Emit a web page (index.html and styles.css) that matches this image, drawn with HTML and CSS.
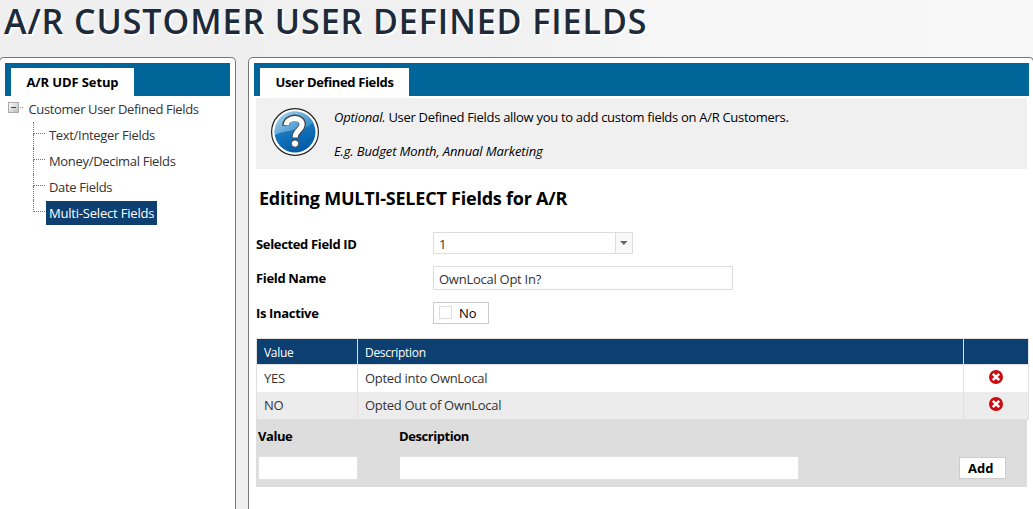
FILE: index.html
```html
<!DOCTYPE html>
<html lang="en">
<head>
<meta charset="utf-8">
<title>A/R Customer User Defined Fields</title>
<link rel="stylesheet" href="styles.css">
</head>
<body>
<h1 class="page-title"><span>A/R CUSTOMER USER DEFINED FIELDS</span></h1>
<div class="columns">
  <aside class="panel side">
    <div class="bar"><div class="tab tab-side"><span>A/R UDF Setup</span></div></div>
    <div class="root">
      <svg class="toggle" width="16" height="11" viewBox="0 0 16 11"><defs><linearGradient id="tg" x1="0" y1="0" x2="1" y2="1"><stop offset="0" stop-color="#fff"/><stop offset="1" stop-color="#bbb"/></linearGradient></defs><rect x=".5" y=".5" width="10" height="10" fill="url(#tg)" stroke="#aaa"/><path d="M3 5.5h5" stroke="#444"/><path d="M12 5.5h1M14 5.5h1" stroke="#888"/></svg>
      <span class="t-root">Customer User Defined Fields</span>
    </div>
    <ul class="tree">
      <li><i></i><span>Text/Integer Fields</span></li>
      <li><i></i><span>Money/Decimal Fields</span></li>
      <li><i></i><span>Date Fields</span></li>
      <li class="selected"><i></i><span>Multi-Select Fields</span></li>
    </ul>
  </aside>
  <main class="panel content">
    <div class="bar"><div class="tab tab-main"><span>User Defined Fields</span></div></div>
    <div class="info">
      <svg width="50" height="50" viewBox="0 0 50 50"><defs><linearGradient id="q" x1=".2" y1="0" x2=".6" y2="1"><stop offset="0" stop-color="#6db3e0"/><stop offset=".45" stop-color="#1878bd"/><stop offset="1" stop-color="#0059a5"/></linearGradient><linearGradient id="g" x1="0" y1="0" x2="1" y2=".6"><stop offset="0" stop-color="#d5ecf9"/><stop offset="1" stop-color="#4a9bd3"/></linearGradient></defs><circle cx="25" cy="25" r="23.4" fill="#fff" stroke="#222" stroke-width="1.2"/><circle cx="25" cy="25" r="20.5" fill="url(#q)"/><path d="M5 28A20.3 20.3 0 0 1 43 15C36 25 20 21 5 28Z" fill="url(#g)" opacity=".65"/><path d="M15.6 18.8C16 8.5 34 8.5 32.2 18.5C31.2 23.5 25.2 23.5 25.2 31.2" fill="none" stroke="#444" stroke-width="7"/><path d="M16.2 18.2C17 9.5 33 9.5 32 18.2C31.2 23.5 25.2 23.5 25.2 30.6" fill="none" stroke="#fff" stroke-width="5.2"/><circle cx="25" cy="36.6" r="3.7" fill="#fff" stroke="#444"/></svg>
      <div class="info-text"><p><em class="opt">Optional.</em><span class="t-info"> User Defined Fields allow you to add custom fields on A/R Customers.</span></p><p><em class="eg">E.g. Budget Month, Annual Marketing</em></p></div>
    </div>
    <h2><span>Editing MULTI-SELECT Fields for A/R</span></h2>
    <div class="form">
      <div class="field f1"><label>Selected Field ID</label><div class="select"><span>1</span><b><svg width="8" height="4" viewBox="0 0 8 4"><path d="M0 0h7.6L3.8 4z" fill="#666"/></svg></b></div></div>
      <div class="field f2"><label>Field Name</label><div class="input"><span>OwnLocal Opt In?</span></div></div>
      <div class="field f3"><label>Is Inactive</label><div class="check"><i></i><span>No</span></div></div>
    </div>
    <div class="grid">
      <div class="row head"><div><span>Value</span></div><div><span>Description</span></div><div></div></div>
      <div class="row r1"><div><span>YES</span></div><div><span>Opted into OwnLocal</span></div><div><svg width="14" height="14" viewBox="0 0 14 14"><circle cx="7" cy="7" r="7" fill="#cc0a10"/><path d="M3.8 3.8l6.4 6.4M10.2 3.8L3.8 10.2" stroke="#fff" stroke-width="2.5"/></svg></div></div>
      <div class="row r2"><div><span>NO</span></div><div><span>Opted Out of OwnLocal</span></div><div><svg width="14" height="14" viewBox="0 0 14 14"><circle cx="7" cy="7" r="7" fill="#cc0a10"/><path d="M3.8 3.8l6.4 6.4M10.2 3.8L3.8 10.2" stroke="#fff" stroke-width="2.5"/></svg></div></div>
    </div>
    <div class="add">
      <div class="add-col av"><label>Value</label><div class="box"></div></div>
      <div class="add-col ad"><label>Description</label><div class="box"></div></div>
      <div class="button"><span>Add</span></div>
    </div>
  </main>
</div>
</body>
</html>
```
FILE: styles.css
```css
* { box-sizing: border-box; }
body { margin: 0; height: 509px; overflow: hidden; font: 13px/18px "Open Sans", "Noto Sans", sans-serif; letter-spacing: -.3px; color: #333; background: linear-gradient(90deg, #efefef 0, #f0f0f0 45%, #f7f7f7 68%, #f8f8f8 100%); }
span, em, label { white-space: nowrap; }
h1, h2, p, ul { margin: 0; padding: 0; }
.page-title { height: 57px; padding: 0 0 0 4px; font-size: 34px; line-height: 42px; font-weight: 600; letter-spacing: .94px; color: #1c2a3a; text-shadow: 2px 2px 1px #fff; }
.columns { display: flex; gap: 12px; height: 460px; margin-left: -1px; }
.panel { background: #fff; border: 1px solid #777; border-radius: 5px 5px 0 0; border-bottom: 0; padding: 5px; }
.side { width: 237px; }
.content { width: 786px; }
.bar { height: 33px; background: #006699; padding: 5px 0 0 6px; }
.side .bar { width: 225px; }
.content .bar { width: 775px; }
.tab { height: 28px; background: #fff; color: #000; font-weight: 700; line-height: 28px; padding-left: 15.5px; }
.tab-side { width: 123px; letter-spacing: -.12px; }
.tab-main { width: 149px; letter-spacing: -.36px; }
.root { height: 26px; display: flex; padding: 6px 0 0 3px; line-height: 15px; letter-spacing: -.36px; }
.toggle { margin-right: 4.5px; flex: none; }
.tree { list-style: none; padding-left: 28px; letter-spacing: -.32px; }
.tree li { height: 26px; display: flex; align-items: center; position: relative; }
.tree i { align-self: flex-start; width: 12px; height: 12px; border-left: 1px dotted #777; border-bottom: 1px dotted #777; margin-right: 1px; }
.tree li + li::before { content: ""; position: absolute; left: 0; top: -14px; height: 14px; border-left: 1px dotted #777; }
.tree span { padding: 0 3px; line-height: 24px; }
.tree .selected span { background: #0d4070; color: #fff; width: 111px; letter-spacing: -.2px; }
.info { margin: 2px 0 0 2px; width: 771px; height: 71px; background: #f0f0f0; display: flex; padding: 9px 0 0 14px; color: #000; }
.info-text { padding: 1px 0 0 14px; }
.info-text p { height: 34px; }
.opt { letter-spacing: -.2px; }
.eg { letter-spacing: -.12px; }
h2 { font-size: 18px; line-height: 24px; letter-spacing: -.22px; color: #000; padding: 17px 0 0 5px; height: 63px; }
.form { padding-left: 2px; }
.field { display: flex; height: 34px; line-height: 23px; }
.f2 { height: 36px; }
.field label { width: 177px; color: #000; font-weight: 700; letter-spacing: -.34px; }
.f1 label, .f2 label { line-height: 25px; }
.select { width: 200px; height: 22px; border: 1px solid #ddd; display: flex; justify-content: space-between; padding-left: 5px; }
.select b { width: 17px; border-left: 1px solid #ddd; background: #f8f8f8; display: flex; justify-content: center; padding-top: 8px; }
.input { width: 300px; height: 24px; border: 1px solid #ddd; padding-left: 5px; line-height: 25px; letter-spacing: -.26px; }
.check { width: 56px; height: 22px; border: 1px solid #ccc; display: flex; padding-left: 5px; line-height: 21px; letter-spacing: 0; color: #000; }
.check i { width: 13px; height: 13px; border: 1px solid #ddd; margin: 3px 7px 0 0; }
.grid { margin: 2px 0 0 2px; width: 773px; border: 1px solid #e0e0e0; }
.row { display: grid; grid-template-columns: 101px 606px 64px; height: 27px; line-height: 27px; }
.row > div { border-right: 1px solid #e0e0e0; padding-left: 7px; }
.row > div:last-child { border: 0; padding: 5px 0 0 25px; line-height: 0; }
.head { height: 26px; background: #0d4070; color: #fff; border-bottom: 1px solid #e0e0e0; font-size: 12px; }
.r2 { background: #ececec; }
.add { margin-left: 2px; width: 771px; height: 67px; background: #ddd; display: flex; padding: 7px 0 0 2px; color: #000; font-weight: 700; letter-spacing: -.44px; }
.add-col { display: flex; flex-direction: column; gap: 11px; }
.av { width: 141px; }
.ad { width: 560px; }
.box { height: 24px; background: #fff; border: 1px solid #e0e0e0; }
.av .box { width: 100px; }
.ad .box { width: 400px; }
.button { width: 47px; height: 22px; margin-top: 30px; border: 1px solid #ccc; background: #fff; line-height: 21px; padding-left: 8px; letter-spacing: 0; }
```
